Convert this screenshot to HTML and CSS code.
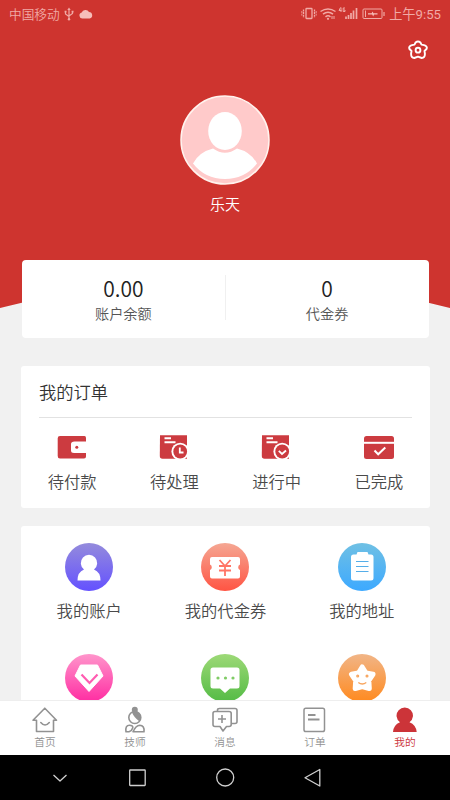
FILE: index.html
```html
<!DOCTYPE html>
<html lang="zh-CN">
<head>
<meta charset="utf-8">
<title>我的</title>
<link rel="stylesheet" href="styles.css">
</head>
<body>
<div class="phone">
  <main class="content">
    <header class="hero">
      <div class="status">
        <span>中国移动</span>
        <svg class="usb" width="10" height="14" viewBox="0 0 10 14" fill="none" stroke="currentColor" stroke-width="1.200"><path d="M5 2v10M1.500 4.500v2.500L5 9.500M8.500 4.500v2L5 9"/><path d="M3.300 3L5 .5 6.700 3zM.6 3.800h1.900v1.800H.6zM7.600 3.800h1.900v1.800H7.600z" fill="currentColor" stroke="none"/><circle cx="5" cy="12.200" r="1.200" fill="currentColor" stroke="none"/></svg>
        <svg class="cloud" width="14" height="10" viewBox="0 0 14 10"><path d="M3.500 9.500a3 3 0 0 1-.8-5.900A4 4 0 0 1 10 3a3.300 3.300 0 0 1 .7 6.500z" fill="#f6bdb9"/></svg>
        <span class="spacer"></span>
        <svg width="85" height="16" viewBox="0 0 85 16" fill="none" stroke="currentColor">
          <rect x="5" y="2.500" width="6" height="10" rx=".5" stroke-width="1.300"/><path d="M2.500 3.500v8M13.500 3.500v8" stroke-width="1.300" stroke-dasharray="2 .6"/><path d="M.8 5v5M15.200 5v5" stroke-width=".8" stroke-dasharray="2 .6"/>
          <path d="M19.500 5.500q7.500-5 15 0M22 8.200q5-3.800 10 0M24.500 10.800q2.500-2 5 0" stroke-width="1.500"/><circle cx="27" cy="12.800" r="1.100" fill="currentColor" stroke="none"/><path d="M31 10v3M33 10v3"/>
          <path d="M39.500 1.500l-1.500 3h2.500M40 1.500v4.500M44 2h-1.800v3.500H44V4h-1"/>
          <path d="M45 13v-2.500M47.500 13V9M50 13V7M52.500 13V4.500M55.500 13V2" stroke-width="1.700"/>
          <rect x="62" y="3" width="19" height="9.500" rx="1"/><path d="M83 6v4" stroke-width="1.200"/><path d="M64.500 4.500V11"/><path d="M67 7.300h3.700L71.500 5.500l1 1.800h4v1.100h-3.500l-.8 2-1-2H67z" fill="#f6bdb9" stroke="none"/>
        </svg>
        <span class="clock">上午9:55</span>
      </div>
      <div class="toolbar">
        <svg width="20" height="20" viewBox="0 0 20 20" fill="none" stroke="#fff" stroke-width="1.900" stroke-linejoin="round"><path d="M7.600 2.500Q10 .3 12.400 2.500L13.500 4.600 16 5.100Q19.800 6.300 18.500 9L16.500 11 16.900 13.700Q17 18 13.700 18L10 16.700 6.300 18Q3 18 3.100 13.700L3.500 11 1.500 9Q.2 6.300 4 5.100L6.500 4.600z"/><circle cx="10" cy="10.200" r="2.400"/></svg>
      </div>
      <div class="profile">
        <svg class="avatar" width="90" height="90" viewBox="0 0 90 90"><circle cx="45" cy="45" r="44" fill="#ffcaca" stroke="#fff3ee" stroke-width="1.500"/><ellipse cx="45" cy="36" rx="16.800" ry="19" fill="#fff"/><path d="M13 68.500Q19 57 33 53.500Q45 62 57 53.500Q71 57 77 68.500Q65 84 45 84Q25 84 13 68.500z" fill="#fff"/></svg>
        <div class="name">乐天</div>
      </div>
    </header>

    <section class="balance">
      <div class="stat"><b>0.00</b><span>账户余额</span></div>
      <div class="stat"><b>0</b><span>代金券</span></div>
    </section>

    <section class="orders">
      <h2>我的订单</h2>
      <div class="order-row">
        <div class="order"><svg width="30" height="26" viewBox="0 0 30 26"><path d="M3 1H27.500Q29 1 29 3V6.500H17.500Q14 6.500 14 9V15.500Q14 18 17 18H29V21.500Q29 23.500 27 23.500H3Q.7 23.500.7 21V3.300Q.7 1 3 1z" fill="#cc3b40"/><circle cx="19.800" cy="12.300" r="1.500" fill="#cc3b40"/></svg><span>待付款</span></div>
        <div class="order"><svg width="30" height="26" viewBox="0 0 30 26"><path d="M1 .3H28V23.700H3.500Q.8 23.700.8 21z" fill="#cc3b40"/><path d="M5.500 3.300H12M5.500 7.300H16.500" stroke="#fff" stroke-width="2"/><circle cx="21.200" cy="16.500" r="8.800" fill="#fff"/><circle cx="21.200" cy="16.500" r="6.900" fill="#cc3b40"/><path d="M20.800 12.500V17.500H24.500" fill="none" stroke="#fff" stroke-width="1.800"/></svg><span>待处理</span></div>
        <div class="order"><svg width="30" height="26" viewBox="0 0 30 26"><path d="M1 .3H28V23.700H3.500Q.8 23.700.8 21z" fill="#cc3b40"/><path d="M5.500 3.300H12M5.500 7.300H16.500" stroke="#fff" stroke-width="2"/><circle cx="21.200" cy="16.500" r="8.800" fill="#fff"/><circle cx="21.200" cy="16.500" r="6.900" fill="#cc3b40"/><path d="M17.800 15.800L21 19 25 15.500" fill="none" stroke="#fff" stroke-width="1.800"/></svg><span>进行中</span></div>
        <div class="order"><svg width="32" height="26" viewBox="0 0 32 26"><rect x="1" y="1" width="30" height="23" rx="2.500" fill="#cc3b40"/><path d="M1 7.800H31" stroke="#fff" stroke-width="2"/><path d="M11.500 15.500L15.200 19.300 22.300 12.500" fill="none" stroke="#fff" stroke-width="2"/></svg><span>已完成</span></div>
      </div>
    </section>

    <section class="services">
      <div class="service"><i class="disc violet"><svg width="48" height="48" viewBox="0 0 48 48"><path d="M12.500 37.500Q12.500 29 19 26.500A8.200 8.200 0 1 1 29 26.500Q35.500 29 35.500 37.500z" fill="#fff"/></svg></i><span>我的账户</span></div>
      <div class="service"><i class="disc coral"><svg width="48" height="48" viewBox="0 0 48 48"><path d="M11 14H37Q39 14 39 16V21.500A3 3 0 0 0 39 27V33.500Q39 35.500 37 35.500H11Q9 35.500 9 33.500V27A3 3 0 0 0 9 21.500V16Q9 14 11 14z" fill="#fff"/><path d="M18.500 17L24 23 29.500 17M18 23H30M18 27.500H30M24 23V33" fill="none" stroke="#ff7566" stroke-width="1.800"/></svg></i><span>我的代金券</span></div>
      <div class="service"><i class="disc blue"><svg width="48" height="48" viewBox="0 0 48 48"><path d="M15.500 11.500H18.500L19.500 9H29.500L30.500 11.500H33Q35.500 11.500 35.500 14V35Q35.500 37.500 33 37.500H15.500Q13 37.500 13 35V14Q13 11.500 15.500 11.500z" fill="#fff"/><path d="M18 18.500H30.500M18 23.500H30.500M18 28.500H30.500" stroke="#55aee9" stroke-width="1.200"/></svg></i><span>我的地址</span></div>
      <div class="service"><i class="disc pink"><svg width="48" height="48" viewBox="0 0 48 48"><path d="M15.500 11H32.500L38 22 24 37.500 10 22z" fill="#fff" stroke="#fff" stroke-linejoin="round"/><path d="M16.500 20.500L24.500 29 32.500 20.500" fill="none" stroke="#ff5cb1" stroke-width="2.200"/></svg></i></div>
      <div class="service"><i class="disc green"><svg width="48" height="48" viewBox="0 0 48 48"><path d="M12 13.500H36Q38.500 13.500 38.500 16V32Q38.500 34.500 36 34.500H29L24 39 19 34.500H12Q9.500 34.500 9.500 32V16Q9.500 13.500 12 13.500z" fill="#fff"/><g fill="#80cc66"><circle cx="17" cy="24" r="1.600"/><circle cx="24.500" cy="24" r="1.600"/><circle cx="32" cy="24" r="1.600"/></g></svg></i></div>
      <div class="service"><i class="disc orange"><svg width="48" height="48" viewBox="0 0 48 48"><path d="M24.200 13L28 19 35 20.300 30.800 26.500 31.300 34.500 24.200 32.500 17.200 34.500 17.700 26.500 13.500 20.300 20.500 19z" fill="#fff" stroke="#fff" stroke-width="5" stroke-linejoin="round"/><g fill="none" stroke="#f8a55e" stroke-width="1.300"><circle cx="19.700" cy="22" r=".9"/><circle cx="29" cy="22" r=".9"/><path d="M20.300 28.500Q24.300 31.500 28.300 28.500"/></g></svg></i></div>
    </section>
  </main>

  <nav class="tabs">
    <div class="tab"><svg width="28" height="28" viewBox="0 0 28 28" fill="none" stroke="currentColor" stroke-width="1.600" stroke-linejoin="round" stroke-linecap="round"><path d="M5.500 14.200H2L13.800 2.200 25.500 14.200H22.500V25.500H5.500zM9.800 16.500Q14 21.500 18.300 16.500"/></svg><span>首页</span></div>
    <div class="tab"><svg width="28" height="28" viewBox="0 0 28 28" fill="none" stroke="currentColor" stroke-width="1.600"><circle cx="13.800" cy="11.500" r="6"/><path d="M11 6.500Q13 11.500 18.500 15.500Q21.500 10.500 18 7Q14.500 4.500 11 6.500z" fill="currentColor" stroke="none"/><circle cx="13.800" cy="3.700" r="3" fill="currentColor" stroke="none"/><path d="M5 25.800Q4 19.300 8.500 19.300Q12 19.300 11.800 21.800Q11 24.800 8 25.800zM12 25.800Q15 19.300 18.700 19.300Q23.700 19.500 23 25.800z" stroke-linejoin="round"/></svg><span>技师</span></div>
    <div class="tab"><svg width="28" height="28" viewBox="0 0 28 28" fill="none" stroke="currentColor" stroke-width="1.600" stroke-linejoin="round"><path d="M4 5.500H18Q20.200 5.500 20.200 7.500V18.500Q20.200 20.500 18 20.500H15.500L12 25 9 20.500H4Q2 20.500 2 18.500V7.500Q2 5.500 4 5.500zM6.500 5V4Q6.500 2.500 8.500 2.500H24Q26 2.500 26 4.500V15.500Q26 17.500 24 17.500H21M11 9V17M7 13H15"/></svg><span>消息</span></div>
    <div class="tab"><svg width="28" height="28" viewBox="0 0 28 28" fill="none" stroke="currentColor" stroke-width="1.500"><rect x="3" y="2.300" width="20.500" height="23.200" rx="1.800"/><path d="M7 9H14.500M7 13.500H18.500" stroke-width="1.800"/></svg><span>订单</span></div>
    <div class="tab active"><svg width="28" height="28" viewBox="0 0 28 28"><path d="M2 26Q2.500 19 9 16.300A8.200 8.200 0 1 1 18.500 16.300Q25 19 25.700 26z" fill="currentColor"/></svg><span>我的</span></div>
  </nav>

  <footer class="system">
    <svg width="20" height="20" viewBox="0 0 20 20"><path d="M3.500 7L10 13 16.500 7"/></svg>
    <svg width="20" height="20" viewBox="0 0 20 20"><rect x="1.700" y="2" width="15.500" height="15.500" rx=".5"/></svg>
    <svg width="20" height="20" viewBox="0 0 20 20"><circle cx="9.200" cy="9.500" r="8.500"/></svg>
    <svg width="20" height="20" viewBox="0 0 20 20"><path d="M15.800 1.500V18L1 9.700z"/></svg>
  </footer>
</div>
</body>
</html>
```

FILE: styles.css
```css
* { box-sizing: border-box; margin: 0; padding: 0; }
body {
  width: 450px;
  height: 800px;
  overflow: hidden;
  font-family: "Noto Sans CJK SC", sans-serif;
  font-weight: 350;
  color: #333;
}
svg { display: block; flex: none; }
.phone { display: flex; flex-direction: column; height: 800px; background: #f1f1f1; }
.content { height: 700px; overflow: hidden; }

.hero {
  height: 308px;
  background: #ce342f;
  clip-path: path("M0 0H450V308Q225 250 0 308Z");
}
.status {
  display: flex;
  align-items: center;
  height: 27px;
  padding: 0 9px 0 9px;
  color: #f1aaa6;
  font-size: 12.700px;
}
.usb { margin-left: 4px; }
.cloud { margin-left: 5px; }
.spacer { flex: 1; }
.clock { margin-left: 3px; font-family: Roboto, "Noto Sans CJK SC", sans-serif; font-size: 13.200px; font-weight: 400; }
.toolbar { display: flex; justify-content: flex-end; padding: 13px 22px 0 0; }
.profile { display: flex; flex-direction: column; align-items: center; padding-top: 35px; }
.name { margin-top: 7px; font-size: 15px; line-height: 24px; color: #fff; }

.balance {
  position: relative;
  display: flex;
  height: 78px;
  margin: -48px 21.500px 0 22px;
  padding-top: 15px;
  border-radius: 4px;
  background: #fff;
}
.stat { flex: 1; display: flex; flex-direction: column; align-items: center; height: 45px; }
.stat + .stat { border-left: 1px solid #f0f0f0; }
.stat b { font-size: 21px; line-height: 26px; font-weight: 350; color: #222; }
.stat span { margin-top: 2px; font-size: 14.200px; line-height: 20px; color: #555; }

.orders {
  height: 142px;
  margin: 27.500px 20px 0 21px;
  border-radius: 3px;
  background: #fff;
}
.orders h2 {
  height: 52px;
  margin: 0 18px;
  border-bottom: 1px solid #e2e2e2;
  font-size: 17.300px;
  line-height: 51px;
  font-weight: 350;
}
.order-row { display: flex; padding-top: 17px; }
.order { flex: 1; display: flex; flex-direction: column; align-items: center; }
.order:nth-child(-n+3) svg { margin-right: 1px; }
.order span { margin-top: 8px; font-size: 16.300px; line-height: 24px; color: #4a4a4a; }

.services {
  display: grid;
  grid-template-columns: repeat(3, 1fr);
  grid-auto-rows: 110.500px;
  height: 200px;
  margin: 18.500px 20px 0 21px;
  padding-top: 17px;
  border-radius: 3px 3px 0 0;
  background: #fff;
}
.service { display: flex; flex-direction: column; align-items: center; }
.service span { margin-top: 7px; font-size: 16.300px; line-height: 24px; color: #4a4a4a; }
.disc { display: block; width: 48px; height: 48px; border-radius: 50%; }
.violet { background: linear-gradient(#948bdc, #6451ff); }
.coral { background: linear-gradient(#f5a793, #ff5443); }
.blue { background: linear-gradient(#6fc0e4, #3da9ff); }
.pink { background: linear-gradient(#ff95cb, #ff2da2); }
.green { background: linear-gradient(#9dd977, #54bb45); }
.orange { background: linear-gradient(#f1b587, #ff8a1f); }

.tabs { display: flex; height: 55px; border-top: 1px solid #eee; background: #fff; }
.tab { flex: 1; display: flex; flex-direction: column; align-items: center; padding-top: 5px; color: #929292; }
.tab span { font-size: 10.700px; line-height: 16px; }
.tab.active { color: #cc3439; }

.system { display: flex; gap: 68px; align-items: center; height: 45px; padding-left: 50px; background: #000; }
.system svg { fill: none; stroke: #d0d0d0; stroke-width: 1.300; stroke-linejoin: round; }
.system svg:nth-child(2) { margin-left: -10px; }
```
